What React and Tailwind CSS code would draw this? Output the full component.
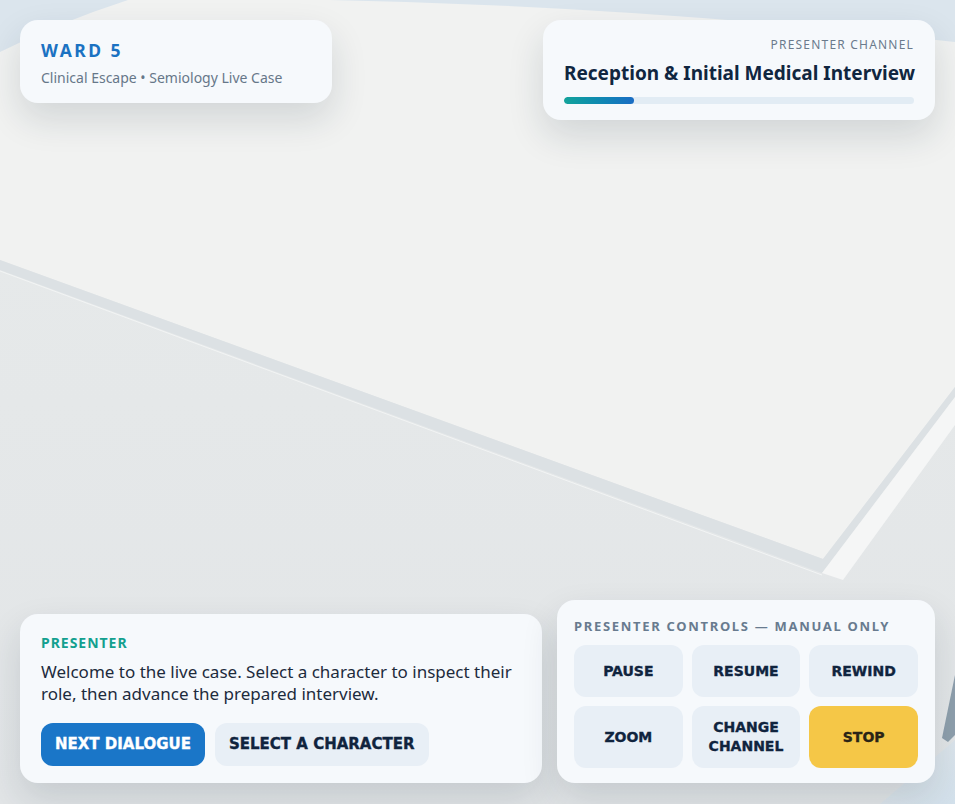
import React from 'react';

const sans = { fontFamily: '"Noto Sans", "Open Sans", sans-serif' };
const heavy = { fontFamily: '"DejaVu Sans", "Liberation Sans", sans-serif' };

// 3D ward floor seen from above, drawn as flat shapes
function SceneBackdrop() {
  return (
    <svg
      className="absolute inset-0 h-full w-full"
      viewBox="0 0 955 804"
      preserveAspectRatio="none"
    >
      <defs>
        <linearGradient id="lowerFloor" x1="0" y1="0" x2="0" y2="1">
          <stop offset="0" stopColor="#e8ebeb" />
          <stop offset="1" stopColor="#e2e5e7" />
        </linearGradient>
        <linearGradient id="cornerSky" x1="0" y1="0" x2="1" y2="1">
          <stop offset="0" stopColor="#e4e8ea" />
          <stop offset="1" stopColor="#d3e1ec" />
        </linearGradient>
      </defs>
      <rect width="955" height="804" fill="url(#lowerFloor)" />
      {/* upper floor slab */}
      <polygon points="0,0 955,0 955,387 823,559 0,260" fill="#f1f2f1" />
      {/* sky corners */}
      <path d="M0,0 L128,0 Q60,22 0,52 Z" fill="#dbe5ed" />
      <path d="M330,0 L955,0 L955,42 Q640,6 330,0 Z" fill="#dbe5ed" />
      {/* slab edge */}
      <polygon points="0,260 823,559 955,387 955,397 822,573 0,270" fill="#dce1e4" />
      <polygon points="822,573 955,397 955,425 843,580" fill="#f5f6f6" />
      <line x1="0" y1="271" x2="822" y2="575" stroke="#f2f4f4" strokeWidth="1" />
      {/* right pole */}
      <polygon points="955,675 955,735 948,742 942,738" fill="#8e9fac" />
      {/* bottom right corner */}
      <polygon points="880,804 955,740 955,804" fill="url(#cornerSky)" />
    </svg>
  );
}

function WardCard() {
  return (
    <div className="w-[312px] rounded-[18px] bg-[#f6f9fc] px-[21px] pt-[18px] pb-[15px] shadow-[0_16px_36px_rgba(20,40,60,0.14)]">
      <div className="text-[17.5px] font-bold leading-6 tracking-[0.14em] text-[#1b72c2]">WARD 5</div>
      <div className="mt-[6px] text-[14px] leading-5 text-[#667789]">
        Clinical Escape • Semiology Live Case
      </div>
    </div>
  );
}

function ChannelCard() {
  const progress = 20;
  return (
    <div className="w-[392px] rounded-[18px] bg-[#f6f9fc] px-[21px] pt-[17px] pb-[16px] shadow-[0_16px_36px_rgba(20,40,60,0.14)]">
      <div className="text-right text-[12px] leading-4 tracking-[0.1em] text-[#6b7b8c]">PRESENTER CHANNEL</div>
      <div className="mt-[7px] text-right text-[19px] font-bold leading-[26px] whitespace-nowrap text-[#102640]">
        Reception &amp; Initial Medical Interview
      </div>
      <div className="mt-[11px] h-[7px] w-full overflow-hidden rounded-full bg-[#e2ecf4]">
        <div
          className="h-full rounded-full bg-gradient-to-r from-[#14a39a] to-[#1b6cc4]"
          style={{ width: `${progress}%` }}
        />
      </div>
    </div>
  );
}

function PresenterCard() {
  return (
    <div className="w-[522px] rounded-[18px] bg-[#f6f9fc] px-[21px] pt-[20px] pb-[17px] shadow-[0_16px_36px_rgba(20,40,60,0.14)]">
      <div className="text-[14px] font-bold leading-[18px] tracking-[0.07em] text-[#13a08f]">PRESENTER</div>
      <p className="mt-[9px] text-[17px] leading-[22px] text-[#1d2b3c]">
        Welcome to the live case. Select a character to inspect their role, then advance the prepared interview.
      </p>
      <div className="mt-[18px] flex gap-[10px]">
        <button
          style={heavy}
          className="h-[43px] rounded-xl bg-[#1a76c8] px-[14px] text-[15px] font-bold text-white [-webkit-text-stroke:0.35px_white]"
        >
          NEXT DIALOGUE
        </button>
        <button
          style={heavy}
          className="h-[43px] rounded-xl bg-[#e8eff6] px-[14px] text-[15px] font-bold text-[#10243e] [-webkit-text-stroke:0.35px_#10243e]"
        >
          SELECT A CHARACTER
        </button>
      </div>
    </div>
  );
}

const controls = [
  { label: 'PAUSE' },
  { label: 'RESUME' },
  { label: 'REWIND' },
  { label: 'ZOOM' },
  { label: 'CHANGE CHANNEL' },
  { label: 'STOP', accent: true },
];

function ControlsCard() {
  return (
    <div className="w-[378px] rounded-[18px] bg-[#f6f9fc] px-[17px] pt-[16px] pb-[15px] shadow-[0_16px_36px_rgba(20,40,60,0.14)]">
      <div className="text-[13px] font-bold leading-5 tracking-[0.13em] whitespace-nowrap text-[#687b8f]">
        PRESENTER CONTROLS — MANUAL ONLY
      </div>
      <div className="mt-[9px] grid grid-cols-3 gap-[9px]">
        {controls.map((c) => (
          <button
            key={c.label}
            style={heavy}
            className={
              c.accent
                ? 'flex min-h-[52px] items-center justify-center rounded-xl bg-[#f5c747] px-2 py-3 text-[14px] font-bold leading-[19px] text-[#2a2416] [-webkit-text-stroke:0.35px_#2a2416]'
                : 'flex min-h-[52px] items-center justify-center rounded-xl bg-[#e8eff6] px-2 py-3 text-[14px] font-bold leading-[19px] text-[#10243e] [-webkit-text-stroke:0.35px_#10243e]'
            }
          >
            {c.label === 'CHANGE CHANNEL' ? (
              <span>
                CHANGE
                <br />
                CHANNEL
              </span>
            ) : (
              c.label
            )}
          </button>
        ))}
      </div>
    </div>
  );
}

export default function App() {
  return (
    <div style={sans} className="relative h-[804px] w-full overflow-hidden bg-[#e8ebeb]">
      <SceneBackdrop />
      <div className="relative flex h-full flex-col justify-between p-5 pb-[21px]">
        <div className="flex items-start justify-between">
          <WardCard />
          <ChannelCard />
        </div>
        <div className="flex items-end justify-between">
          <PresenterCard />
          <ControlsCard />
        </div>
      </div>
    </div>
  );
}
